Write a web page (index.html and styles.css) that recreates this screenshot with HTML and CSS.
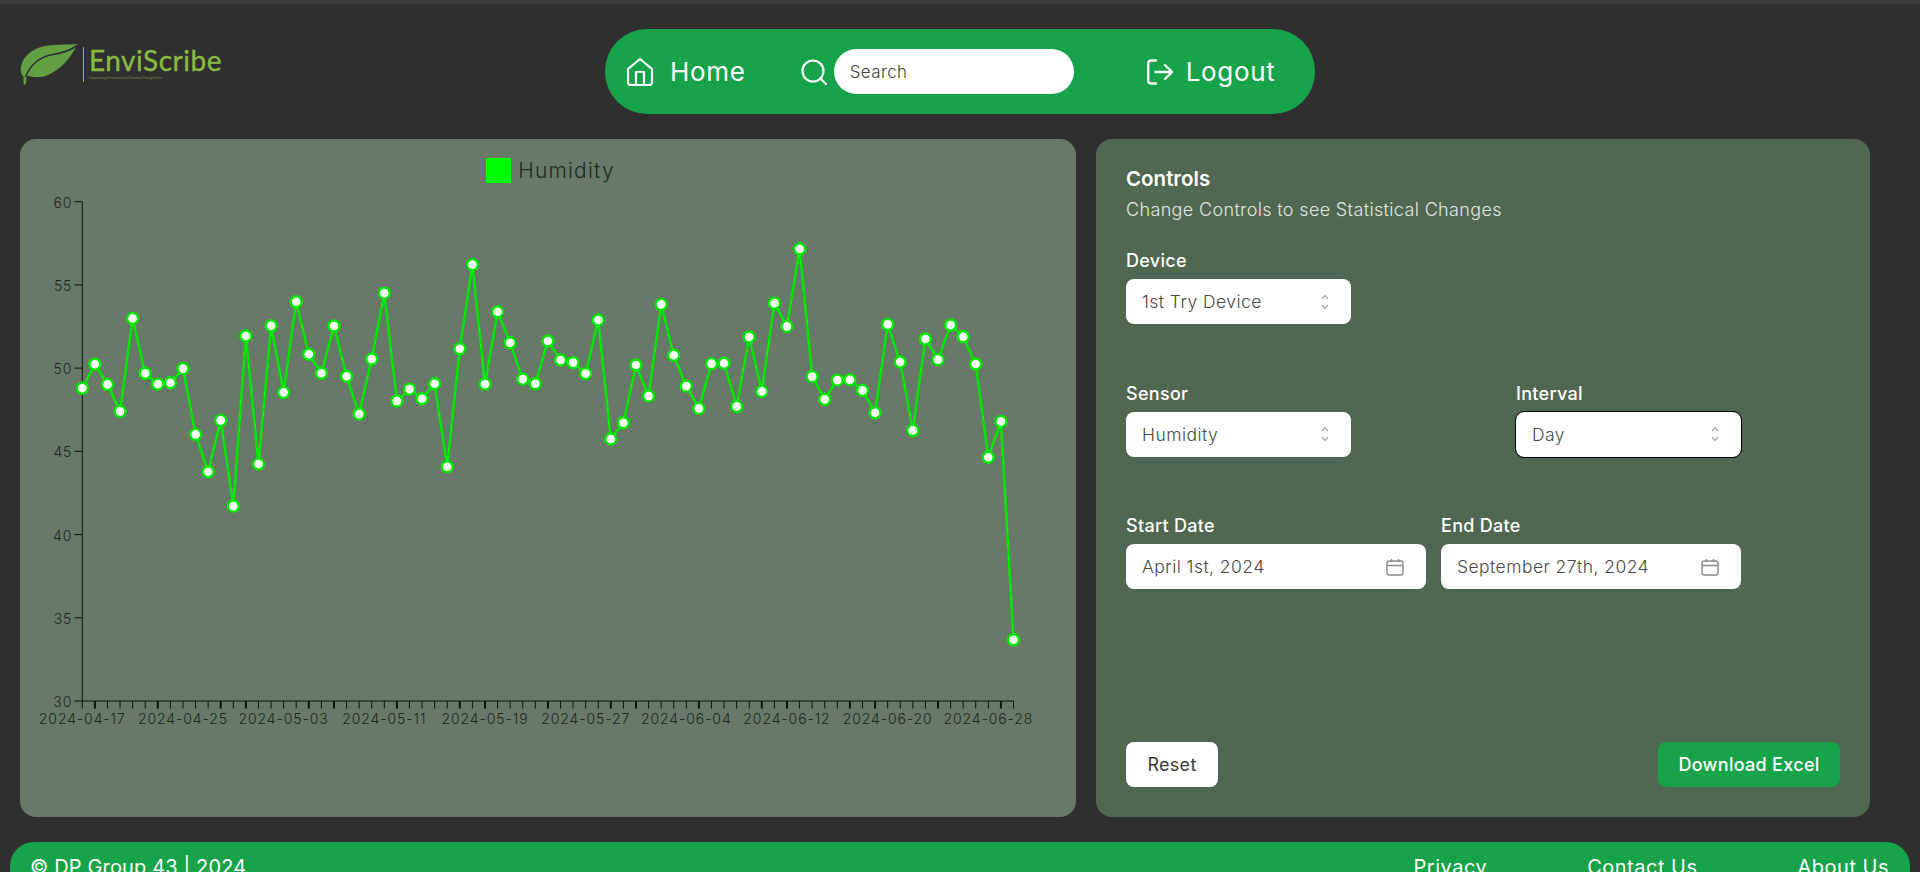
FILE: index.html
```html
<!DOCTYPE html>
<html lang="en">
<head>
    <meta charset="UTF-8">
    <meta name="viewport" content="width=device-width, initial-scale=1.0">
    <title>EnviScribe</title>
    <link rel="stylesheet" href="styles.css">
</head>
<body>
    <div class="topStrip"></div>
    <header class="header">
        <div class="logo">
            <svg class="logoLeaf" width="58" height="42" viewBox="0 0 58 42">
                <path d="M57.5 0 C48 1 30 -0.5 18 4 C8 8 2 15 0.8 24 C0.4 28 1.5 31 3.4 32.5 L3.6 39.5 C3.8 41 5.8 41 6 39.5 L6.8 31.5 C13 33.5 21 34 28 31 C40 26 51 14 57.5 0 Z" fill="#62a043"/>
                <path d="M57 1.5 C50 7 42 9 33 10.5 C20 12.5 10 21 5.5 33" fill="none" stroke="#2f2f2f" stroke-width="1.6"/>
            </svg>
            <div class="logoText">
                <span class="logoName">EnviScribe</span>
                <span class="logoTag">Empowering Environmental Decisions Through Data</span>
            </div>
        </div>
        <nav class="nav">
            <a class="navLink navHome">
                <svg width="26" height="28" viewBox="0 0 26 28" fill="none" stroke="#fff" stroke-width="2.2" stroke-linejoin="round">
                    <path d="M4 27 H22 A3 3 0 0 0 25 24 V11 L13 1 L1 11 V24 A3 3 0 0 0 4 27 Z"/>
                    <path d="M9 27 V14 H17 V27"/>
                </svg>
                Home
            </a>
            <div class="navSearch">
                <svg width="26" height="26" viewBox="0 0 26 26" fill="none" stroke="#fff" stroke-width="2.2" stroke-linecap="round">
                    <circle cx="12" cy="12" r="10.5"/>
                    <path d="M19.5 19.5 L25 25"/>
                </svg>
                <input class="searchBox" type="text" placeholder="Search">
            </div>
            <a class="navLink navLogout">
                <svg width="26" height="26" viewBox="0 0 26 26" fill="none" stroke="#fff" stroke-width="2.3" stroke-linecap="round" stroke-linejoin="round">
                    <path d="M9 1.5 H4 A3 3 0 0 0 1.2 4.5 V21.5 A3 3 0 0 0 4 24.5 H9"/>
                    <path d="M8.5 13 H25 M18 6 L25 13 L18 20"/>
                </svg>
                Logout
            </a>
        </nav>
    </header>

    <main class="content">
        <section class="card chartCard">
            <div class="legend">
                <span class="legendSwatch"></span>
                <span class="legendName">Humidity</span>
            </div>
            <svg id="chart" class="chart" width="1056" height="600" viewBox="0 0 1056 600"></svg>
        </section>

        <section class="card controlsCard">
            <h2 class="controlsTitle">Controls</h2>
            <p class="controlsSub">Change Controls to see Statistical Changes</p>

            <div class="fields">
                <div class="field">
                    <label class="fieldLabel">Device</label>
                    <button class="picker" type="button">
                        <span>1st Try Device</span>
                        <svg class="chevrons" width="10" height="16" viewBox="0 0 10 16"><path d="M2 5 L5 1.5 L8 5 M2 11 L5 14.5 L8 11"/></svg>
                    </button>
                </div>
                <div class="fieldRow">
                    <div class="field">
                        <label class="fieldLabel">Sensor</label>
                        <button class="picker" type="button">
                            <span>Humidity</span>
                            <svg class="chevrons" width="10" height="16" viewBox="0 0 10 16"><path d="M2 5 L5 1.5 L8 5 M2 11 L5 14.5 L8 11"/></svg>
                        </button>
                    </div>
                    <div class="field">
                        <label class="fieldLabel">Interval</label>
                        <button class="picker pickerFocus" type="button">
                            <span>Day</span>
                            <svg class="chevrons" width="10" height="16" viewBox="0 0 10 16"><path d="M2 5 L5 1.5 L8 5 M2 11 L5 14.5 L8 11"/></svg>
                        </button>
                    </div>
                </div>
                <div class="dateRow">
                    <div class="field">
                        <label class="fieldLabel">Start Date</label>
                        <button class="picker pickerDate" type="button">
                            <span>April 1st, 2024</span>
                            <svg class="calendar" width="18" height="18" viewBox="0 0 18 18"><rect x="1" y="3" width="16" height="14" rx="2"/><path d="M1 7.5 H17 M5.5 1 V4 M12.5 1 V4"/></svg>
                        </button>
                    </div>
                    <div class="field">
                        <label class="fieldLabel">End Date</label>
                        <button class="picker pickerDate" type="button">
                            <span>September 27th, 2024</span>
                            <svg class="calendar" width="18" height="18" viewBox="0 0 18 18"><rect x="1" y="3" width="16" height="14" rx="2"/><path d="M1 7.5 H17 M5.5 1 V4 M12.5 1 V4"/></svg>
                        </button>
                    </div>
                </div>
            </div>

            <div class="actions">
                <button class="btn btnReset" type="button">Reset</button>
                <button class="btn btnDownload" type="button">Download Excel</button>
            </div>
        </section>
    </main>

    <footer class="footer">
        <span class="footerCopy">© DP Group 43 | 2024</span>
        <div class="footerLinks">
            <a>Privacy</a>
            <a>Contact Us</a>
            <a>About Us</a>
        </div>
    </footer>

    <script>
        const humidity = [
            48.79, 50.23, 49.02, 47.40, 52.99, 49.69, 49.04, 49.12, 49.97, 46.02,
            43.78, 46.86, 41.71, 51.93, 44.24, 52.55, 48.54, 53.99, 50.83, 49.69,
            52.53, 49.51, 47.24, 50.55, 54.51, 48.02, 48.74, 48.16, 49.06, 44.08,
            51.17, 56.22, 49.04, 53.39, 51.53, 49.34, 49.06, 51.63, 50.49, 50.33,
            49.67, 52.89, 45.74, 46.72, 50.19, 48.32, 53.83, 50.77, 48.92, 47.58,
            50.27, 50.29, 47.70, 51.87, 48.60, 53.91, 52.51, 57.16, 49.49, 48.12,
            49.28, 49.30, 48.66, 47.32, 52.63, 50.37, 46.26, 51.75, 50.51, 52.59,
            51.89, 50.25, 44.64, 46.80, 33.68
        ];
        // every 8th point gets a date under the axis
        const dateLabels = ["2024-04-17", "2024-04-25", "2024-05-03", "2024-05-11", "2024-05-19",
            "2024-05-27", "2024-06-04", "2024-06-12", "2024-06-20", "2024-06-28"];
        // these ticks come out thicker in the original, two dates on one spot
        const thickTicks = [1, 6, 11, 13, 18, 20, 25, 30, 32, 37, 42, 44, 49, 54, 56, 61, 63, 68, 73];

        const left = 62.3, right = 993.5, top60 = 18.7, bottom30 = 518;
        const stepX = (right - left) / (humidity.length - 1);

        function xFor(i) { return left + i * stepX; }
        function yFor(v) { return bottom30 - (v - 30) * (bottom30 - top60) / 30; }

        function drawChart() {
            let out = "";

            // y axis
            out += `<path class="axis" d="M${left} ${top60} V${bottom30}"/>`;
            for (let v = 30; v <= 60; v += 5) {
                out += `<path class="axis" d="M${left - 8} ${yFor(v)} H${left}"/>`;
                out += `<text class="tickText" x="${left - 10}" y="${yFor(v) + 6}" text-anchor="end">${v}</text>`;
            }

            // x axis
            out += `<path class="axis" d="M${left} ${bottom30} H${right}"/>`;
            for (let i = 0; i < humidity.length; i++) {
                const thick = thickTicks.includes(i) ? " axisThick" : "";
                out += `<path class="axis${thick}" d="M${xFor(i)} ${bottom30} v7.5"/>`;
            }
            dateLabels.forEach(function (label, n) {
                out += `<text class="tickText" x="${xFor(n * 8)}" y="541" text-anchor="middle">${label}</text>`;
            });

            // line then dots on top
            const points = humidity.map((v, i) => xFor(i).toFixed(1) + "," + yFor(v).toFixed(1)).join(" ");
            out += `<polyline class="line" points="${points}"/>`;
            humidity.forEach(function (v, i) {
                out += `<circle class="dot" cx="${xFor(i).toFixed(1)}" cy="${yFor(v).toFixed(1)}" r="5.5"/>`;
            });

            document.getElementById("chart").innerHTML = out;
        }
        window.onload = drawChart;
    </script>
</body>
</html>
```

FILE: styles.css
```css
html, body {
    height: 100%;
    margin: 0;
    overflow: hidden;
    background: #2f2f2f;
    font-family: "Inter", "Open Sans", sans-serif;
}

.topStrip {
    height: 4px;
    background: #3c3c3c;
}

/* header */
.header {
    display: grid;
    grid-template-columns: 1fr auto 1fr;
    padding-top: 25px;
}

.logo {
    display: flex;
    align-items: flex-start;
    padding-left: 20px;
    padding-top: 15px;
}
.logoLeaf {
    flex: none;
}
.logoText {
    display: flex;
    flex-direction: column;
    margin-left: 5px;
    margin-top: 3px;
    padding-left: 5px;
    border-left: 1.5px solid #8bb544;
    height: 35px;
    color: #8aba42;
    font-family: "Lato", sans-serif;
}
.logoName {
    font-size: 28px;
    line-height: 27px;
    letter-spacing: 0.5px;
    -webkit-text-stroke: 0.35px #8aba42;
}
.logoTag {
    font-size: 3.2px;
    line-height: 5px;
    margin-top: 2px;
    color: #6f8f3c;
}

.nav {
    display: flex;
    align-items: center;
    width: 710px;
    height: 85px;
    box-sizing: border-box;
    padding-left: 22px;
    background: #16a34a;
    border-radius: 42px;
}
.navLink {
    display: flex;
    align-items: center;
    color: #fff;
    font-size: 26px;
    letter-spacing: 0.7px;
}
.navHome svg {
    margin-right: 17px;
}
.navLogout svg {
    margin-right: 13px;
}
.navSearch {
    display: flex;
    align-items: center;
    margin-left: 55px;
    margin-right: 73px;
}
.navSearch svg {
    margin-right: 7px;
}
.searchBox {
    width: 240px;
    height: 45px;
    box-sizing: border-box;
    padding: 0 16px;
    border: none;
    border-radius: 23px;
    background: #fff;
    font-family: inherit;
    font-size: 17px;
    font-weight: 300;
    letter-spacing: 0.4px;
}
.searchBox::placeholder {
    color: #444;
}

/* main cards */
.content {
    display: flex;
    gap: 20px;
    height: 678px;
    margin-top: 25px;
    padding: 0 50px 0 20px;
}
.card {
    border-radius: 16px;
    box-sizing: border-box;
}
.chartCard {
    width: 1056px;
    padding-top: 19px;
    background: #68796a;
}
.controlsCard {
    display: flex;
    flex-direction: column;
    width: 774px;
    padding: 26px 30px 30px;
    background: #506752;
    color: #fff;
}

.legend {
    display: flex;
    justify-content: center;
    align-items: center;
    gap: 7px;
    padding-left: 5px;
}
.legendSwatch {
    width: 25px;
    height: 25px;
    background: #00ff00;
}
.legendName {
    font-size: 21px;
    font-weight: 300;
    letter-spacing: 1.2px;
    color: #1f2a21;
}
.chart {
    display: block;
}
.axis {
    fill: none;
    stroke: #0a140c;
    stroke-width: 1;
}
.axisThick {
    stroke-width: 2;
}
.tickText {
    font-size: 14px;
    font-weight: 300;
    letter-spacing: 0.9px;
    fill: #1c261e;
}
.line {
    fill: none;
    stroke: #00ea00;
    stroke-width: 2.5;
}
.dot {
    fill: #fff;
    stroke: #00ea00;
    stroke-width: 2.4;
}

/* controls */
.controlsTitle {
    margin: 0;
    font-size: 20.5px;
    font-weight: 600;
    line-height: 28px;
}
.controlsSub {
    margin: 4px 0 26px;
    font-size: 18px;
    font-weight: 300;
    line-height: 26px;
    letter-spacing: 0.35px;
    color: #e2e8e2;
}
.fields {
    display: flex;
    flex-direction: column;
    gap: 57.5px;
}
.fieldRow {
    display: grid;
    grid-template-columns: 390px 225px;
}
.dateRow {
    display: grid;
    grid-template-columns: 300px 300px;
    gap: 15px;
}
.field {
    display: flex;
    flex-direction: column;
    gap: 6px;
}
.fieldLabel {
    font-size: 18px;
    font-weight: 500;
    line-height: 24px;
    letter-spacing: 0.3px;
}
.picker {
    display: flex;
    justify-content: space-between;
    align-items: center;
    width: 225px;
    height: 45px;
    box-sizing: border-box;
    padding: 0 21px 0 16px;
    border: none;
    border-radius: 8px;
    background: #fff;
    color: #4a4a4a;
    font-family: inherit;
    font-size: 17.5px;
    font-weight: 300;
    letter-spacing: 0.45px;
}
.pickerDate {
    width: 300px;
    padding-right: 22px;
}
.pickerFocus {
    outline: 1.5px solid #000;
    outline-offset: 0;
}
.chevrons {
    fill: none;
    stroke: #8a8a8a;
    stroke-width: 1.1;
}
.calendar {
    fill: none;
    stroke: #8a8a8a;
    stroke-width: 1.4;
}

.actions {
    display: flex;
    justify-content: space-between;
    margin-top: auto;
}
.btn {
    height: 45px;
    border: none;
    border-radius: 8px;
    font-family: inherit;
    font-size: 18px;
    font-weight: 500;
    letter-spacing: 0.3px;
}
.btnReset {
    width: 92px;
    background: #fff;
    color: #3a3a3a;
    font-weight: 400;
}
.btnDownload {
    width: 182px;
    background: #16a34a;
    color: #fff;
}

/* footer */
.footer {
    display: flex;
    justify-content: space-between;
    height: 30px;
    margin: 25px 10px 0;
    padding: 11px 21px 0 20px;
    box-sizing: border-box;
    background: #16a34a;
    border-radius: 24px 24px 0 0;
    color: #fff;
    font-size: 20px;
    line-height: 28px;
    letter-spacing: 0.5px;
}
.footerCopy {
    letter-spacing: 0.15px;
}
.footerLinks {
    display: flex;
    gap: 100px;
}
```
